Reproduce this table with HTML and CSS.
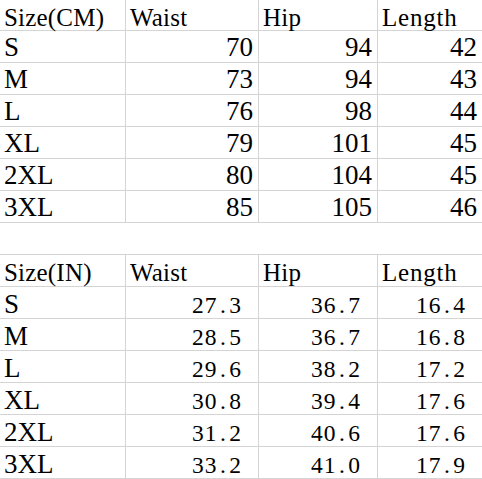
FILE: index.html
```html
<!DOCTYPE html>
<html>
<head>
<meta charset="utf-8">
<link rel="stylesheet" href="styles.css">
</head>
<body>
<div class="page">
  <div class="sheet first">
    <div class="c h">Size(CM)</div><div class="c h">Waist</div><div class="c h">Hip</div><div class="c h wide">Length</div>
    <div class="c v">S</div><div class="c v r">70</div><div class="c v r">94</div><div class="c v r">42</div>
    <div class="c v">M</div><div class="c v r">73</div><div class="c v r">94</div><div class="c v r">43</div>
    <div class="c v">L</div><div class="c v r">76</div><div class="c v r">98</div><div class="c v r">44</div>
    <div class="c v">XL</div><div class="c v r">79</div><div class="c v r">101</div><div class="c v r">45</div>
    <div class="c v">2XL</div><div class="c v r">80</div><div class="c v r">104</div><div class="c v r">45</div>
    <div class="c v">3XL</div><div class="c v r">85</div><div class="c v r">105</div><div class="c v r">46</div>
  </div>
  <div class="gap"></div>
  <div class="sheet second">
    <div class="c h">Size(IN)</div><div class="c h">Waist</div><div class="c h">Hip</div><div class="c h wide">Length</div>
    <div class="c v">S</div><div class="c d">27<span class="dot">.</span>3</div><div class="c d">36<span class="dot">.</span>7</div><div class="c d">16<span class="dot">.</span>4</div>
    <div class="c v">M</div><div class="c d">28<span class="dot">.</span>5</div><div class="c d">36<span class="dot">.</span>7</div><div class="c d">16<span class="dot">.</span>8</div>
    <div class="c v">L</div><div class="c d">29<span class="dot">.</span>6</div><div class="c d">38<span class="dot">.</span>2</div><div class="c d">17<span class="dot">.</span>2</div>
    <div class="c v">XL</div><div class="c d">30<span class="dot">.</span>8</div><div class="c d">39<span class="dot">.</span>4</div><div class="c d">17<span class="dot">.</span>6</div>
    <div class="c v">2XL</div><div class="c d">31<span class="dot">.</span>2</div><div class="c d">40<span class="dot">.</span>6</div><div class="c d">17<span class="dot">.</span>6</div>
    <div class="c v">3XL</div><div class="c d">33<span class="dot">.</span>2</div><div class="c d">41<span class="dot">.</span>0</div><div class="c d">17<span class="dot">.</span>9</div>
  </div>
</div>
</body>
</html>
```

FILE: styles.css
```css
html, body {
  margin: 0;
  padding: 0;
  background: #ffffff;
  overflow: hidden;
}
.page {
  width: 482px;
  height: 479px;
  overflow: hidden;
  color: #000000;
  font-family: "Liberation Serif", "Times New Roman", serif;
}
.sheet {
  display: grid;
  grid-template-columns: 126px 133px 119px 105px;
  grid-auto-rows: 32px;
  width: 483px;
}
.sheet.first {
  grid-template-rows: 31px;
}
.sheet.second {
  border-top: 1px solid #d4d4d4;
}
.gap {
  height: 31px;
}
.c {
  box-sizing: border-box;
  border-right: 1px solid #d4d4d4;
  border-bottom: 1px solid #d4d4d4;
  padding-left: 4px;
  padding-right: 5px;
  white-space: nowrap;
}
.h {
  font-size: 25px;
  line-height: 26px;
  padding-top: 5px;
  padding-left: 4px;
  letter-spacing: 0.2px;
}
.h.wide {
  letter-spacing: 0.8px;
}
.v {
  font-size: 27px;
  line-height: 26px;
  padding-top: 3px;
}
.second .v {
  padding-top: 4px;
}
.r {
  text-align: right;
}
.d {
  font-size: 23.5px;
  line-height: 26px;
  padding-top: 5px;
  letter-spacing: 1px;
  text-align: right;
  padding-right: 16px;
}
.dot {
  display: inline-block;
  width: 11.75px;
  text-align: center;
}
```
